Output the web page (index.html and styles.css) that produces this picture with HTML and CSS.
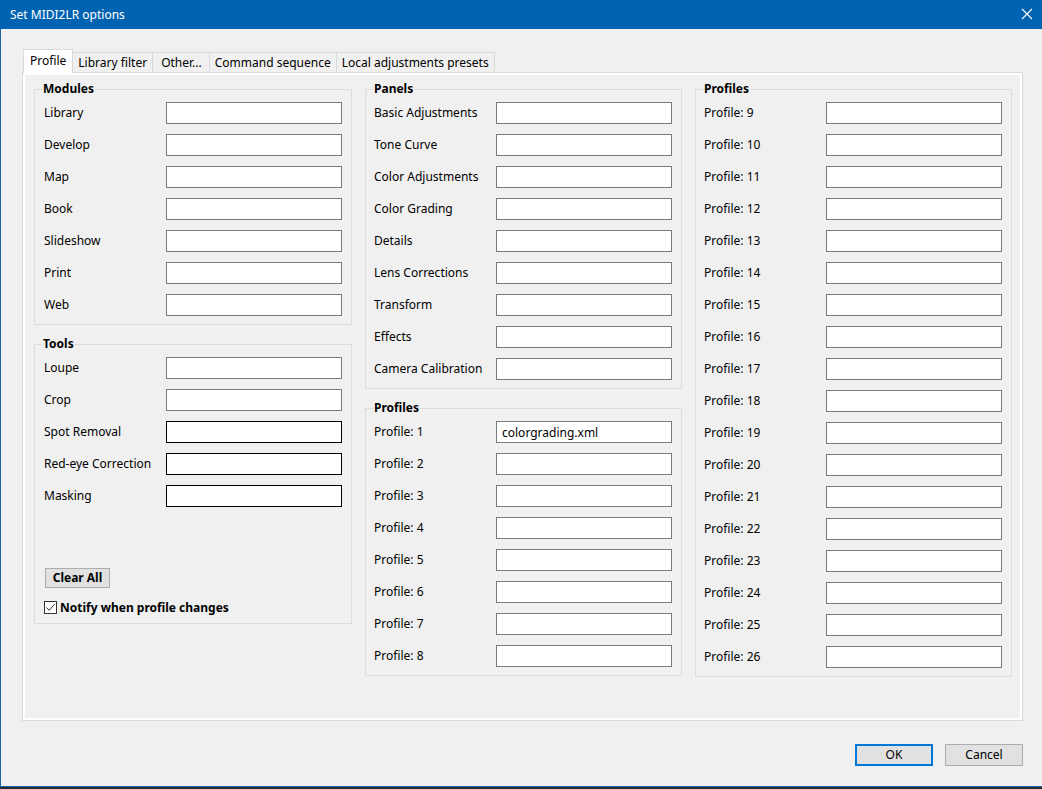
FILE: index.html
```html
<!DOCTYPE html>
<html lang="en">
<head>
<meta charset="utf-8">
<title>Set MIDI2LR options</title>
<link rel="stylesheet" href="styles.css">
</head>
<body>
<div class="window">
  <div class="titlebar">
    <span class="title">Set MIDI2LR options</span>
    <svg class="close" width="12" height="12" viewBox="0 0 12 12"><path d="M1 1 L11 11 M11 1 L1 11" stroke="#fff" stroke-width="1.1" fill="none"/></svg>
  </div>
  <div class="client">
    <div class="tabs">
      <div class="tab active">Profile</div>
      <div class="tab">Library filter</div>
      <div class="tab wide">Other...</div>
      <div class="tab">Command sequence</div>
      <div class="tab">Local adjustments presets</div>
    </div>
    <div class="pane">
      <div class="col first">
        <fieldset class="group">
          <legend>Modules</legend>
          <div class="rows">
            <div class="row"><span class="lbl">Library</span><input class="field" type="text"></div>
            <div class="row"><span class="lbl">Develop</span><input class="field" type="text"></div>
            <div class="row"><span class="lbl">Map</span><input class="field" type="text"></div>
            <div class="row"><span class="lbl">Book</span><input class="field" type="text"></div>
            <div class="row"><span class="lbl">Slideshow</span><input class="field" type="text"></div>
            <div class="row"><span class="lbl">Print</span><input class="field" type="text"></div>
            <div class="row"><span class="lbl">Web</span><input class="field" type="text"></div>
          </div>
        </fieldset>
        <fieldset class="group tools">
          <legend>Tools</legend>
          <div class="rows">
            <div class="row"><span class="lbl">Loupe</span><input class="field" type="text"></div>
            <div class="row"><span class="lbl">Crop</span><input class="field" type="text"></div>
            <div class="row"><span class="lbl">Spot Removal</span><input class="field dark" type="text"></div>
            <div class="row"><span class="lbl">Red-eye Correction</span><input class="field dark" type="text"></div>
            <div class="row"><span class="lbl">Masking</span><input class="field dark" type="text"></div>
          </div>
          <div class="tools-foot">
            <button class="btn clear">Clear All</button>
            <label class="check">
              <span class="box"><svg width="11" height="11" viewBox="0 0 11 11"><path d="M1.5 5.5 L4.2 8.3 L9.6 2.2" stroke="#333" stroke-width="1" fill="none"/></svg></span>
              <span class="check-text">Notify when profile changes</span>
            </label>
          </div>
        </fieldset>
      </div>
      <div class="col">
        <fieldset class="group">
          <legend>Panels</legend>
          <div class="rows">
            <div class="row"><span class="lbl">Basic Adjustments</span><input class="field" type="text"></div>
            <div class="row"><span class="lbl">Tone Curve</span><input class="field" type="text"></div>
            <div class="row"><span class="lbl">Color Adjustments</span><input class="field" type="text"></div>
            <div class="row"><span class="lbl">Color Grading</span><input class="field" type="text"></div>
            <div class="row"><span class="lbl">Details</span><input class="field" type="text"></div>
            <div class="row"><span class="lbl">Lens Corrections</span><input class="field" type="text"></div>
            <div class="row"><span class="lbl">Transform</span><input class="field" type="text"></div>
            <div class="row"><span class="lbl">Effects</span><input class="field" type="text"></div>
            <div class="row"><span class="lbl">Camera Calibration</span><input class="field" type="text"></div>
          </div>
        </fieldset>
        <fieldset class="group">
          <legend>Profiles</legend>
          <div class="rows">
            <div class="row"><span class="lbl">Profile: 1</span><input class="field" type="text" value="colorgrading.xml"></div>
            <div class="row"><span class="lbl">Profile: 2</span><input class="field" type="text"></div>
            <div class="row"><span class="lbl">Profile: 3</span><input class="field" type="text"></div>
            <div class="row"><span class="lbl">Profile: 4</span><input class="field" type="text"></div>
            <div class="row"><span class="lbl">Profile: 5</span><input class="field" type="text"></div>
            <div class="row"><span class="lbl">Profile: 6</span><input class="field" type="text"></div>
            <div class="row"><span class="lbl">Profile: 7</span><input class="field" type="text"></div>
            <div class="row"><span class="lbl">Profile: 8</span><input class="field" type="text"></div>
          </div>
        </fieldset>
      </div>
      <div class="col">
        <fieldset class="group">
          <legend>Profiles</legend>
          <div class="rows">
            <div class="row"><span class="lbl">Profile: 9</span><input class="field" type="text"></div>
            <div class="row"><span class="lbl">Profile: 10</span><input class="field" type="text"></div>
            <div class="row"><span class="lbl">Profile: 11</span><input class="field" type="text"></div>
            <div class="row"><span class="lbl">Profile: 12</span><input class="field" type="text"></div>
            <div class="row"><span class="lbl">Profile: 13</span><input class="field" type="text"></div>
            <div class="row"><span class="lbl">Profile: 14</span><input class="field" type="text"></div>
            <div class="row"><span class="lbl">Profile: 15</span><input class="field" type="text"></div>
            <div class="row"><span class="lbl">Profile: 16</span><input class="field" type="text"></div>
            <div class="row"><span class="lbl">Profile: 17</span><input class="field" type="text"></div>
            <div class="row"><span class="lbl">Profile: 18</span><input class="field" type="text"></div>
            <div class="row"><span class="lbl">Profile: 19</span><input class="field" type="text"></div>
            <div class="row"><span class="lbl">Profile: 20</span><input class="field" type="text"></div>
            <div class="row"><span class="lbl">Profile: 21</span><input class="field" type="text"></div>
            <div class="row"><span class="lbl">Profile: 22</span><input class="field" type="text"></div>
            <div class="row"><span class="lbl">Profile: 23</span><input class="field" type="text"></div>
            <div class="row"><span class="lbl">Profile: 24</span><input class="field" type="text"></div>
            <div class="row"><span class="lbl">Profile: 25</span><input class="field" type="text"></div>
            <div class="row"><span class="lbl">Profile: 26</span><input class="field" type="text"></div>
          </div>
        </fieldset>
      </div>
    </div>
    <div class="buttons">
      <button class="btn default">OK</button>
      <button class="btn">Cancel</button>
    </div>
  </div>
</div>
</body>
</html>
```

FILE: styles.css
```css
* { box-sizing: border-box; }

html, body {
  margin: 0;
  padding: 0;
}

body {
  width: 1042px;
  height: 789px;
  background: #2b2b2b;
  font-family: "Noto Sans", "Segoe UI", sans-serif;
  font-size: 12px;
  color: #000;
  overflow: hidden;
}

.window {
  width: 1042px;
  height: 787px;
  background: #f0f0f0;
  border-left: 1px solid #1a64a8;
  border-bottom: 1px solid #1669b6;
  display: flex;
  flex-direction: column;
}

.titlebar {
  height: 29px;
  flex: none;
  background: #0063b1;
  color: #fff;
  display: flex;
  align-items: center;
  justify-content: space-between;
  padding: 0 9px 0 10px;
  margin-left: -1px;
}

.title {
  font-size: 12px;
  line-height: 16px;
}

.close {
  display: block;
  margin-top: -1px;
}

.client {
  flex: 1;
  padding: 20px 19px 0 21px;
  display: flex;
  flex-direction: column;
}

.tabs {
  display: flex;
  align-items: flex-end;
  height: 23px;
  padding-left: 1px;
}

.tab {
  height: 20px;
  padding: 0 5px;
  border: 1px solid #d9d9d9;
  border-bottom: none;
  background: #f0f0f0;
  margin-left: -1px;
  line-height: 19px;
  white-space: nowrap;
  position: relative;
}

.tab:first-child {
  margin-left: 0;
}

.tab.wide {
  padding: 0 7px 0 8px;
}

.tab.active {
  height: 24px;
  margin-bottom: -1px;
  padding: 0 6px;
  background: #fff;
  line-height: 21px;
  z-index: 2;
}

.pane {
  height: 649px;
  border: 1px solid #d9d9d9;
  box-shadow: inset 0 0 0 2px #fff;
  padding: 9px 9px 0 11px;
  display: grid;
  grid-template-columns: 318px 317px 317px;
  column-gap: 13px;
  align-items: start;
  position: relative;
  z-index: 1;
}

.col {
  display: flex;
  flex-direction: column;
  gap: 12px;
}

.group {
  margin: 0;
  min-width: 0;
  border: 1px solid #dcdcdc;
  padding: 6px 9px 8px 9px;
}

.group legend {
  font-weight: bold;
  line-height: 14px;
  padding: 0 1px;
  margin-left: -2px;
}

.rows {
  display: flex;
  flex-direction: column;
  gap: 10px;
}

.row {
  display: flex;
  align-items: center;
  justify-content: space-between;
  height: 22px;
}

.lbl {
  white-space: nowrap;
  line-height: 16px;
  margin-left: -1px;
}

.col.first .lbl {
  margin-left: 0;
}

.field {
  width: 176px;
  height: 22px;
  border: 1px solid #7a7a7a;
  background: #fff;
  margin: 0;
  padding: 0 5px;
  font-family: inherit;
  font-size: 12px;
  color: #000;
  outline: none;
}

.field.dark {
  border-color: #000;
}

.tools {
  padding-bottom: 9px;
}

.tools-foot {
  display: flex;
  flex-direction: column;
  align-items: flex-start;
  padding-top: 61px;
  gap: 13px;
}

.btn {
  font-family: inherit;
  font-size: 12px;
  color: #000;
  background: #e1e1e1;
  border: 1px solid #adadad;
  margin: 0;
  padding: 0;
  height: 22px;
  width: 78px;
  line-height: 18px;
}

.btn.clear {
  width: 65px;
  height: 20px;
  font-weight: bold;
  line-height: 16px;
  margin-left: 1px;
}

.btn.default {
  border: 2px solid #0078d7;
}

.check {
  display: flex;
  align-items: center;
  gap: 3px;
  font-weight: bold;
  height: 13px;
}

.box {
  width: 13px;
  height: 13px;
  border: 1px solid #333;
  background: #fff;
  display: flex;
  align-items: center;
  justify-content: center;
}

.box svg {
  display: block;
}

.check-text {
  line-height: 14px;
}

.buttons {
  display: flex;
  justify-content: flex-end;
  gap: 12px;
  margin-top: 23px;
}
```
